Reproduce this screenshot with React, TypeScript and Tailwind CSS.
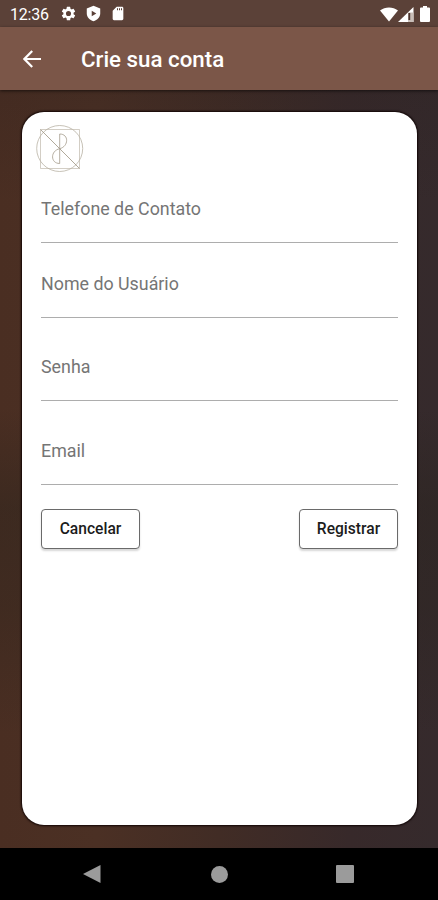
import React from "react";

function StatusBar() {
  return (
    <div className="flex h-[27px] items-center justify-between bg-[#5b4138] pl-[10px] pr-[8px] text-white">
      <div className="flex items-center">
        <span className="w-[50px] pt-[2px] text-[16px] leading-none tracking-[-0.2px]">12:36</span>
        <svg className="h-[17px] w-[17px]" viewBox="0 0 24 24" fill="currentColor">
          <path d="M19.14 12.94c.04-.3.06-.61.06-.94 0-.32-.02-.64-.07-.94l2.03-1.58a.49.49 0 0 0 .12-.61l-1.92-3.32a.49.49 0 0 0-.59-.22l-2.39.96c-.5-.38-1.03-.7-1.62-.94l-.36-2.54a.48.48 0 0 0-.48-.41h-3.84a.48.48 0 0 0-.47.41l-.36 2.54c-.59.24-1.13.57-1.62.94l-2.39-.96a.48.48 0 0 0-.59.22L2.74 8.87a.48.48 0 0 0 .12.61l2.03 1.58c-.05.3-.09.63-.09.94s.02.64.07.94l-2.03 1.58a.49.49 0 0 0-.12.61l1.92 3.32c.12.22.37.29.59.22l2.39-.96c.5.38 1.03.7 1.62.94l.36 2.54c.05.24.24.41.48.41h3.84c.24 0 .44-.17.47-.41l.36-2.54c.59-.24 1.13-.56 1.62-.94l2.39.96c.22.08.47 0 .59-.22l1.92-3.32a.48.48 0 0 0-.12-.61zM12 15.6a3.6 3.6 0 1 1 0-7.2 3.6 3.6 0 0 1 0 7.2z" />
        </svg>
        <svg className="ml-[8px] h-[17px] w-[17px]" viewBox="0 0 24 24" fill="currentColor">
          <path fillRule="evenodd" d="M12 1 2.500 5v7c0 5 4 9.500 9.500 11 5.500-1.500 9.500-6 9.500-11V5zM9.500 8v8l6.500-4z" />
        </svg>
        <svg className="ml-[8px] h-[17px] w-[16px]" viewBox="0 0 24 24" fill="currentColor">
          <path d="M18 2h-8L4 8v12c0 1.100.9 2 2 2h12c1.100 0 2-.9 2-2V4c0-1.100-.9-2-2-2zm-6 5h-1.500V4H12zm3 0h-1.500V4H15zm3 0h-1.500V4H18z" />
        </svg>
      </div>
      <div className="flex items-center pt-px">
        <svg className="h-[15px] w-[18px]" viewBox="0 0 18 15" fill="currentColor">
          <path d="M0 3.500C5.200-.5 12.800-.5 18 3.500L9 14.500z" />
        </svg>
        <svg className="h-[15px] w-[16px]" viewBox="0 0 16 15">
          <path d="M0 15 15.500 0v15z" fill="#fff" />
          <path d="M10 5.500h5.500V15H10z" fill="#c9beb8" />
          <path d="M10.400 6h1.800v7h-1.800z" fill="#4a332c" />
        </svg>
        <svg className="ml-[6px] h-[16px] w-[10px]" viewBox="0 0 10 16" fill="currentColor">
          <path d="M3 0h4v1.500h2q1 0 1 1V15q0 1-1 1H1q-1 0-1-1V2.500q0-1 1-1h2z" />
        </svg>
      </div>
    </div>
  );
}

function AppBar() {
  return (
    <header className="relative flex h-[63px] items-center bg-[#7b5648] pl-[23px] text-white shadow-[0_1px_3px_rgba(0,0,0,0.6)]">
      <svg className="h-[18px] w-[18px]" viewBox="0 0 18 18" fill="none" stroke="currentColor" strokeWidth="2.200">
        <path d="M18 9H1.600M9.200 1 1.400 9l7.800 8" />
      </svg>
      <h1 className="ml-[40px] pt-px text-[22.300px] font-medium leading-none">Crie sua conta</h1>
    </header>
  );
}

function Emblem() {
  return (
    <svg className="ml-[14px] h-[48px] w-[48px]" viewBox="0 0 48 48" fill="none" stroke="#b9b2a4" strokeWidth="0.800">
      <circle cx="23.700" cy="23.500" r="23" />
      <path d="M4.500 4.500h39v39h-39z" strokeOpacity="0.8" />
      <path d="M4.500 4.500l39 39" stroke="#9c9380" />
      <path d="M23.700 9v29.500M23.700 9c9.500 0 9 12.500 0 14.700M23.700 23.700c-9.500 2-9.500 14.800 0 14.800" stroke="#a39b8a" />
    </svg>
  );
}

function Field({ label, className = "" }: { label: string; className?: string }) {
  return (
    <div className={`h-[46px] shrink-0 border-b border-[#adadad] text-[17.840px] leading-[24px] text-[#757575] ${className}`}>
      {label}
    </div>
  );
}

function Button({ children }: { children: React.ReactNode }) {
  return (
    <button className="h-[40px] w-[99px] rounded-[4px] border border-[#6a6a6a] bg-white pt-[2px] text-[15.600px] font-medium leading-none text-[#1c1c1c] shadow-[0_2px_2px_rgba(0,0,0,0.16)]">
      {children}
    </button>
  );
}

export default function App() {
  return (
    <div className="flex h-[900px] w-[438px] flex-col overflow-hidden bg-black font-['Roboto',sans-serif]">
      <StatusBar />
      <AppBar />
      <main className="flex h-[758px] flex-col bg-[linear-gradient(180deg,rgba(40,30,30,0.2)_0%,transparent_15%,transparent_42%,rgba(40,35,28,0.4)_55%,rgba(40,35,28,0.3)_68%,transparent_85%),linear-gradient(90deg,#4a2e22_0%,#4b3024_22%,#412c25_50%,#37292a_80%,#352a2c_100%)] pl-[22px] pr-[21.500px] pt-[21.500px]">
        <section className="flex h-[713px] flex-col rounded-[22px] bg-white pt-[13px] shadow-[0_0_2px_1px_rgba(12,0,0,0.9)]">
          <Emblem />
          <div className="flex flex-col pl-[19px] pr-[18.500px] pt-[24.500px]">
            <Field label="Telefone de Contato" />
            <Field label="Nome do Usuário" className="mt-[29px]" />
            <Field label="Senha" className="mt-[37px]" />
            <Field label="Email" className="mt-[38px]" />
            <div className="flex justify-between pt-[24px]">
              <Button>Cancelar</Button>
              <Button>Registrar</Button>
            </div>
          </div>
        </section>
      </main>
      <nav className="flex h-[52px] items-center bg-black pl-[83px]">
        <svg className="h-[18px] w-[18px]" viewBox="0 0 18 18" fill="#9b9b9b">
          <path d="M0 9 17.500 0v18z" />
        </svg>
        <span className="ml-[110px] h-[17px] w-[17px] rounded-full bg-[#9b9b9b]" />
        <span className="ml-[108px] h-[18px] w-[18px] rounded-[1px] bg-[#9b9b9b]" />
      </nav>
    </div>
  );
}
